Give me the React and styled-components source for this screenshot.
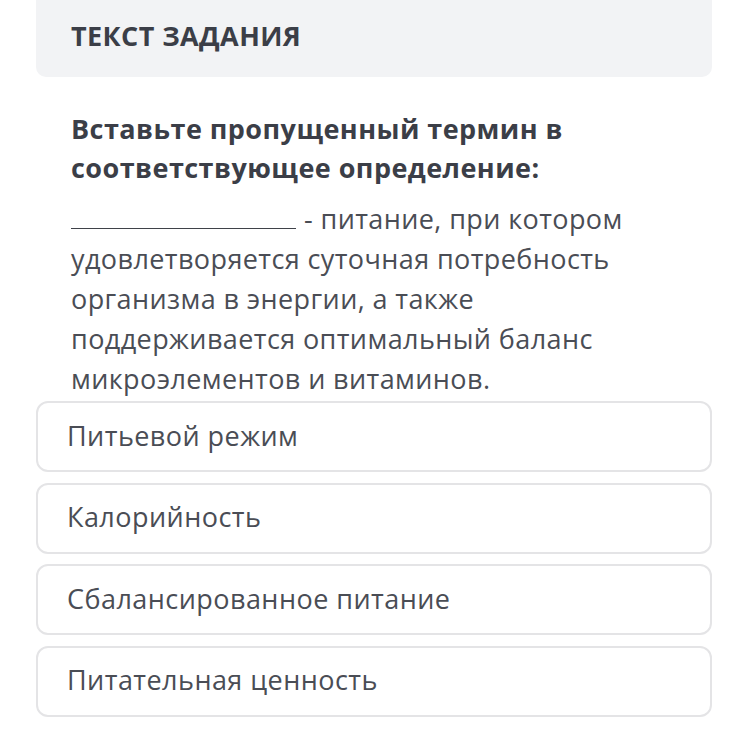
import React from 'react';
import styled, { createGlobalStyle } from 'styled-components';

const GlobalStyle = createGlobalStyle`
  html, body {
    margin: 0;
    padding: 0;
    background: #ffffff;
  }
  body {
    font-family: "Open Sans", "Liberation Sans", sans-serif;
    -webkit-font-smoothing: antialiased;
  }
`;

const Page = styled.div`
  width: 748px;
  height: 752px;
  overflow: hidden;
  box-sizing: border-box;
  padding: 0 36px;
  display: flex;
  flex-direction: column;
`;

const Header = styled.div`
  background: #f2f3f5;
  border-radius: 0 0 10px 10px;
  height: 77px;
  padding: 0 35px;
  display: flex;
  align-items: center;
  box-sizing: border-box;
`;

const HeaderTitle = styled.h2`
  margin: 0;
  padding-bottom: 7px;
  font-size: 27px;
  letter-spacing: 0.4px;
  font-weight: 700;
  color: #3b3e47;
`;

const Body = styled.div`
  padding: 32px 35px 0;
`;

const Question = styled.p`
  margin: 0;
  font-size: 27px;
  letter-spacing: 0.45px;
  line-height: 39px;
  font-weight: 700;
  color: #3b3e47;
`;

const Definition = styled.p`
  margin: 12px 0 0;
  font-size: 27px;
  letter-spacing: 0.4px;
  line-height: 40px;
  font-weight: 400;
  color: #4a4d55;
`;

const Blank = styled.span`
  display: inline-block;
  width: 225px;
  height: 24px;
  border-bottom: 1px solid #3f4249;
  vertical-align: baseline;
  margin-right: 8px;
`;

const Options = styled.div`
  display: flex;
  flex-direction: column;
  gap: 10.5px;
  margin-top: 2px;
`;

const Option = styled.div`
  height: 71px;
  box-sizing: border-box;
  border: 2px solid #e4e4e6;
  border-radius: 12px;
  padding: 0 29px 3px;
  display: flex;
  align-items: center;
  font-size: 27px;
  letter-spacing: 0.45px;
  color: #4a4d55;
`;

const options = [
  'Питьевой режим',
  'Калорийность',
  'Сбалансированное питание',
  'Питательная ценность',
];

export default function App() {
  return (
    <>
      <GlobalStyle />
      <Page>
        <Header>
          <HeaderTitle>ТЕКСТ ЗАДАНИЯ</HeaderTitle>
        </Header>
        <Body>
          <Question>
            Вставьте пропущенный термин в соответствующее определение:
          </Question>
          <Definition>
            <Blank />- питание, при котором удовлетворяется суточная
            потребность организма в энергии, а также поддерживается
            оптимальный баланс микроэлементов и витаминов.
          </Definition>
        </Body>
        <Options>
          {options.map((o) => (
            <Option key={o}>{o}</Option>
          ))}
        </Options>
      </Page>
    </>
  );
}
